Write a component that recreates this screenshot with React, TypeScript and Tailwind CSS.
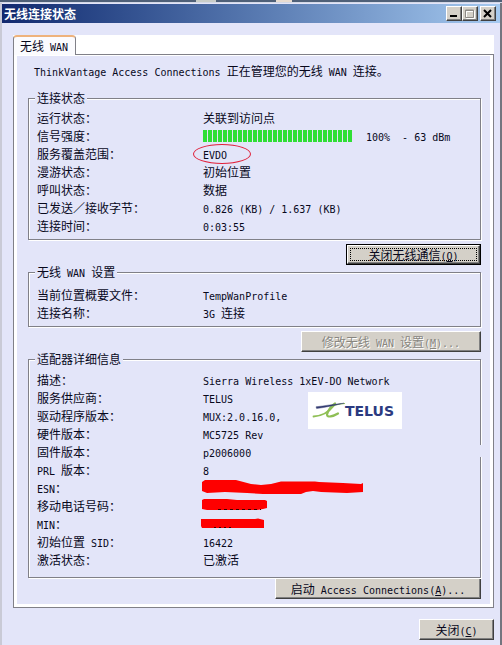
import React from 'react';

interface Row {
  label: string;
  value: React.ReactNode;
}

// Latin runs are set in a monospace face, half the width of a Chinese character
const Txt: React.FC<{ children: string }> = ({ children }) => (
  <>
    {children.split(/([\x20-\x7e]+)/).map((part, i) =>
      i % 2 === 1 ? (
        <span key={i} className="whitespace-pre font-['DejaVu_Sans_Mono',monospace] text-[10px] leading-none">
          {part}
        </span>
      ) : (
        part
      )
    )}
  </>
);

const Key: React.FC<{ children: string }> = ({ children }) => (
  <span className="font-['DejaVu_Sans_Mono',monospace] text-[10px] leading-none">
    (<u>{children}</u>)
  </span>
);

interface GroupProps {
  title: string;
  rows: Row[];
  className: string;
  children?: React.ReactNode;
}

const Group: React.FC<GroupProps> = ({ title, rows, className, children }) => (
  <fieldset
    className={`relative min-w-0 border border-[#808088] px-1.5 shadow-[1px_1px_0_#fff,inset_1px_1px_0_#fff] ${className}`}
  >
    <legend className="h-[14px] bg-[#e3e5f9] px-0.5 leading-[14px]">
      <Txt>{title}</Txt>
    </legend>
    <dl className="px-0.5">
      {rows.map((row) => (
        <div key={row.label} className="grid h-[18px] grid-cols-[166px_1fr] items-center leading-[18px]">
          <dt>
            <Txt>{row.label}</Txt>
          </dt>
          <dd className="whitespace-nowrap">{typeof row.value === 'string' ? <Txt>{row.value}</Txt> : row.value}</dd>
        </div>
      ))}
    </dl>
    {children}
  </fieldset>
);

const raised =
  'border border-t-white border-l-white border-r-[#404040] border-b-[#404040] bg-[#d4d0c8] shadow-[inset_-1px_-1px_0_#808080]';
const pushButton = `flex h-[21px] items-center justify-center whitespace-nowrap leading-[16px] ${raised}`;
const captionButton = `flex h-[15px] w-4 items-center justify-center ${raised}`;

const SignalBar = () => (
  <span className="flex items-center">
    <span className="flex gap-px" role="img" aria-label="100%">
      {Array.from({ length: 30 }, (_, i) => (
        <span key={i} className="h-3 w-1 bg-[#2fdf35]" />
      ))}
    </span>
    <span className="ml-3.5">
      <Txt>100%</Txt>
    </span>
    <span className="ml-3">
      <Txt>- 63 dBm</Txt>
    </span>
  </span>
);

const connectionRows: Row[] = [
  { label: '运行状态：', value: '关联到访问点' },
  { label: '信号强度：', value: <SignalBar /> },
  {
    label: '服务覆盖范围：',
    value: (
      <span className="relative inline-block">
        <Txt>EVDO</Txt>
        <span className="absolute -top-px -left-2.5 h-5 w-[58px] rounded-[50%] border border-[#e0203a]" />
      </span>
    ),
  },
  { label: '漫游状态：', value: '初始位置' },
  { label: '呼叫状态：', value: '数据' },
  { label: '已发送／接收字节：', value: '0.826 (KB) / 1.637 (KB)' },
  { label: '连接时间：', value: '0:03:55' },
];

const settingRows: Row[] = [
  { label: '当前位置概要文件：', value: 'TempWanProfile' },
  { label: '连接名称：', value: '3G 连接' },
];

const adapterRows: Row[] = [
  { label: '描述：', value: 'Sierra Wireless 1xEV-DO Network' },
  { label: '服务供应商：', value: 'TELUS' },
  { label: '驱动程序版本：', value: 'MUX:2.0.16.0,' },
  { label: '硬件版本：', value: 'MC5725 Rev' },
  { label: '固件版本：', value: 'p2006000' },
  { label: 'PRL 版本：', value: '8' },
  {
    label: 'ESN：',
    value: (
      <svg width="162" height="18" viewBox="0 0 162 18" className="block overflow-visible" fill="#fe0000">
        <path d="M-1 3 L2 1 L33 1 L48 5 L58 6 L68 5 L78 2.5 L112 2.5 L116 3 L140 4 L158 5 L160 4 V13 L144 14 L118 13 L110 12 L103 13 L98 15 L60 15 L44 14 L22 13 L4 14 L-1 12Z" />
      </svg>
    ),
  },
  {
    label: '移动电话号码：',
    value: (
      <svg width="162" height="18" viewBox="0 0 162 18" className="block overflow-visible">
        <path fill="#fe0000" d="M-1 3 L1 2 L24 2 L34 3 L62 3 L64 4 V11 L60 12 L54 13 L14 13 L4 13 L-1 12Z" />
        <path stroke="#300" strokeDasharray="3 3" d="M15 12.5 H58" />
      </svg>
    ),
  },
  {
    label: 'MIN：',
    value: (
      <svg width="162" height="18" viewBox="0 0 162 18" className="block overflow-visible">
        <path fill="#fe0000" d="M-2 4 L52 4 L55 3.5 L61 5 V13 L40 13 L-1 13 L-2 11Z" />
        <path stroke="#300" strokeDasharray="2 3" d="M11 12.5 H30" />
      </svg>
    ),
  },
  { label: '初始位置 SID：', value: '16422' },
  { label: '激活状态：', value: '已激活' },
];

const TelusLogo = () => (
  <div className="absolute top-[26px] left-[279px] flex h-[37px] w-[94px] items-center bg-white pl-1">
    <svg width="33" height="20" viewBox="0 0 33 20" fill="none">
      <path d="M1.5 15.5 C9 15 17 11 22 4.5" stroke="#8fbf55" strokeWidth="1.8" strokeLinecap="round" />
      <path
        d="M23 2.5 C20 4 15.5 10 15 13.5 C15 17 21 15.5 26 12.5"
        stroke="#8fbf55"
        strokeWidth="2.2"
        strokeLinecap="round"
      />
      <path d="M20 5.5 C24 3.5 28 3 33 2.5" stroke="#8fbf55" strokeWidth="1" />
      <path d="M4 5.8 C13 4.8 22 3 32 2.2 C23 4 14 6.4 4.6 7.6Z" fill="#343c72" stroke="#343c72" strokeWidth="0.4" />
    </svg>
    <span className="font-['DejaVu_Sans',sans-serif] text-[14px] leading-[16px] font-bold text-[#2b3a80]">TELUS</span>
  </div>
);

const App: React.FC = () => {
  return (
    <div className="min-h-screen bg-[#e3e5f9] font-['Noto_Sans_CJK_SC',sans-serif] text-[12px] text-[#08081c]">
      <div className="flex h-[3px] border-b border-[#d3d8e6] bg-[#4f6078]">
        <span className="ml-[39%] h-0.5 w-5 bg-[#c9cdc8]" />
        <span className="ml-[12%] h-0.5 w-4 bg-[#e8dcd0]" />
      </div>

      <div className="min-h-[calc(100vh-3px)] border-r-2 border-l-2 border-r-[#74757f] border-l-[#c9cad6] pt-px">
        <header className="flex h-[19px] items-center bg-linear-to-r from-[#12296f] to-[#a6caf0] pr-1 pl-0.5">
          <h1 className="flex-1 leading-[18px] font-bold text-white">无线连接状态</h1>
          <button type="button" aria-label="最小化" className={captionButton}>
            <svg width="10" height="9" viewBox="0 0 10 9">
              <path d="M1 7 H8" stroke="#000" strokeWidth="2" />
            </svg>
          </button>
          <button type="button" aria-label="最大化" className={captionButton} disabled>
            <svg width="10" height="10" viewBox="0 0 10 10" fill="none">
              <path d="M1.5 2.5 H9.5 V9.5 H1.5Z M1 2 H10" stroke="#fff" />
              <path d="M0.5 1 H8.5 V8.5 H0.5Z M0 1.5 H9" stroke="#8d8a86" />
            </svg>
          </button>
          <button type="button" aria-label="关闭" className={`ml-0.5 ${captionButton}`}>
            <svg width="10" height="9" viewBox="0 0 10 9">
              <path d="M1 1 L8 8 M8 1 L1 8" stroke="#000" strokeWidth="2" />
            </svg>
          </button>
        </header>

        <main className="pt-3 pr-1.5 pb-1 pl-[11px]">
          <div role="tablist" className="flex h-[19px] bg-white">
            <button
              type="button"
              role="tab"
              aria-selected="true"
              className="relative -mb-px h-5 rounded-t-sm border-x border-t-2 border-x-[#808088] border-t-[#eeb27c] bg-[#fbfbfe] pr-[7px] pl-1.5 leading-[16px]"
            >
              <Txt>无线 WAN</Txt>
            </button>
          </div>

          <div role="tabpanel" className="border border-[#808088]">
            <div className="border-x-3 border-t border-b-3 border-white pt-[7px] pr-[9px] pb-[5px] pl-[11px]">
              <p className="mb-3 pl-1.5 leading-[16px]">
                <Txt>ThinkVantage Access Connections 正在管理您的无线 WAN 连接。</Txt>
              </p>

              <Group title="连接状态" rows={connectionRows} className="pt-1 pb-1" />
              <div className="mt-1 flex justify-end">
                <button type="button" className="h-[21px] w-[135px] border border-black leading-[14px]">
                  <span className={`flex h-full items-center justify-center p-0.5 ${raised}`}>
                    <span className="flex h-full w-full items-center justify-center border border-dotted border-black">
                      <span>
                        关闭无线通信<Key>O</Key>
                      </span>
                    </span>
                  </span>
                </button>
              </div>

              <Group title="无线 WAN 设置" rows={settingRows} className="pt-[7px] pb-1" />
              <div className="mt-1 flex justify-end">
                <button
                  type="button"
                  disabled
                  className={`w-[180px] text-[#88867f] [text-shadow:1px_1px_0_#fff] ${pushButton}`}
                >
                  <span>
                    <Txt>修改无线 WAN 设置</Txt>
                    <Key>M</Key>
                    <Txt>...</Txt>
                  </span>
                </button>
              </div>

              <Group title="适配器详细信息" rows={adapterRows} className="pt-[5px] pb-2">
                <TelusLogo />
                <span className="absolute top-[79px] -right-0.5 h-3 w-1 bg-[#e3e5f9]" />
              </Group>
              <div className="flex justify-end">
                <button type="button" className={`w-[206px] ${pushButton}`}>
                  <span>
                    <Txt>启动 Access Connections</Txt>
                    <Key>A</Key>
                    <Txt>...</Txt>
                  </span>
                </button>
              </div>
            </div>
          </div>

          <div className="mt-[11px] flex justify-end">
            <button type="button" className={`w-[75px] ${pushButton}`}>
              <span>
                关闭<Key>C</Key>
              </span>
            </button>
          </div>
        </main>
      </div>
    </div>
  );
};

export default App;
